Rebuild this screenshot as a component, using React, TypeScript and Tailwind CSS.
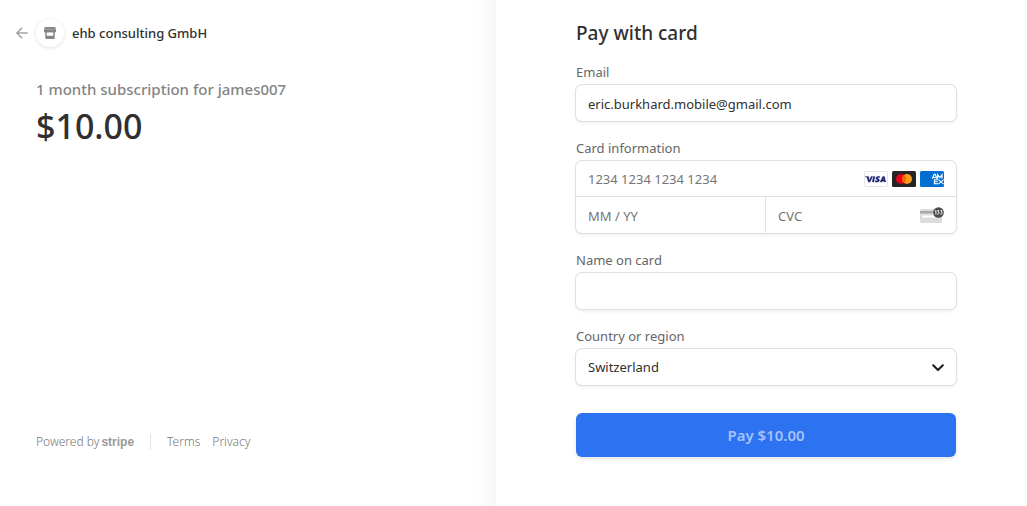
import { useState } from "react";
import type { ReactNode } from "react";

const labelClass = "block text-[13px] leading-4 text-[#666666] mb-[5px]";
const boxClass =
  "rounded-md bg-white shadow-[0_0_0_1px_#e0e0e0,0_2px_4px_0_rgba(0,0,0,0.07),0_1px_2px_0_rgba(0,0,0,0.05)]";
const inputClass =
  "block w-full h-9 px-3 pt-px text-[13px] text-[#303030] placeholder:text-[#757575] bg-transparent outline-none";

function BackIcon() {
  return (
    <svg width="12" height="12" viewBox="0 0 12 12" fill="none" stroke="#a3a3a3" strokeWidth="1.6" strokeLinecap="round" strokeLinejoin="round">
      <path d="M11.2 6H1M5.6 1.2L.9 6l4.7 4.8" />
    </svg>
  );
}

function StoreIcon() {
  return (
    <svg width="12" height="12" viewBox="0 0 12 12" fill="#858585">
      <path d="M1.2 0h9.6c.3 0 .5.2.6.4L12 3v1.2c0 .8-.6 1.3-1.3 1.3v5.7c0 .5-.3.8-.8.8H2.1c-.5 0-.8-.3-.8-.8V5.5C.6 5.5 0 5 0 4.2V3L.6.4c.1-.2.3-.4.6-.4z" />
      <path d="M1 2.2h10" stroke="#b4b4b4" strokeWidth=".7" />
      <path d="M2.8 5.2c.6.5 1.3.5 2 0 .7.5 1.7.5 2.4 0 .7.5 1.4.5 2 0v3.6H2.8z" fill="#fff" />
    </svg>
  );
}

function VisaIcon() {
  return (
    <svg width="24" height="16" viewBox="0 0 24 16" role="img" aria-label="Visa">
      <rect x=".5" y=".5" width="23" height="15" rx="1" fill="#fff" stroke="#e3e3e8" />
      <path
        d="M2.8 6.15c-.4-.2-.9-.4-1.5-.5l.05-.2h2.6c.35 0 .6.12.7.5l.6 2.9.15.8 1.55-4.2h1.7L6.1 11.05H4.4zM10.9 5.44l-1 5.62H8.3l1-5.62zM14.4 5.3c.6 0 1.1.12 1.4.24l-.2 1.3c-.9-.4-2.1-.35-2.1.17 0 .6 2 .7 2 2.2 0 1.2-1.1 1.95-2.7 1.95-.7 0-1.4-.14-1.7-.3l.22-1.35c.9.45 2.4.55 2.4-.1 0-.65-1.9-.7-1.9-2.15 0-1.15 1.1-1.96 2.58-1.96zM20.5 5.44l1.28 5.62h-1.45l-.2-.85h-2.05l-.33.85h-1.7l2.38-5.12c.17-.38.45-.5.8-.5zm-.95 2.03l-.8 1.6h1.15z"
        fill="#171e6c"
        stroke="#171e6c"
        strokeWidth=".3"
      />
    </svg>
  );
}

function MastercardIcon() {
  return (
    <svg width="24" height="16" viewBox="0 0 24 16" role="img" aria-label="Mastercard">
      <rect width="24" height="16" rx="1.5" fill="#252525" />
      <circle cx="9" cy="8" r="5" fill="#eb001b" />
      <circle cx="15" cy="8" r="5" fill="#f79e1b" />
      <path d="M12 4a5 5 0 0 1 0 8 5 5 0 0 1 0-8z" fill="#ff5f00" />
    </svg>
  );
}

function AmexIcon() {
  return (
    <svg width="24" height="16" viewBox="0 0 24 16" role="img" aria-label="American Express">
      <rect width="24" height="16" rx="1.5" fill="#016fd0" />
      <g fill="none" stroke="#fff" strokeWidth="1.1">
        <path d="M12.2 7.8l2-4.4h1l1.9 4.4M13.2 6.5h3M17.6 7.8V3.6l2.2 3 2.2-3v4.2" />
        <path d="M18 8.8h-3.6v4H18M14.4 10.8h3.2M18.4 8.6l5.2 4.6M23.6 8.6l-5.2 4.6" />
      </g>
    </svg>
  );
}

function CvcIcon() {
  return (
    <svg width="24" height="16" viewBox="0 0 24 16" role="img" aria-label="Card security code">
      <rect y="2" width="22" height="14" rx="1.5" fill="#dcdcdc" />
      <rect y="4" width="22" height="2.5" fill="#a9a9a9" />
      <rect x="2" y="8.5" width="13" height="2" rx=".5" fill="#fff" />
      <circle cx="18.5" cy="5.5" r="5.3" fill="#4a4a4a" />
      <path d="M15 4l.9-.5v4M17.2 3.7h1.7L18 5.2c1.8.1 1.3 2.4-.9 2M20.4 3.7h1.7l-.9 1.5c1.8.1 1.3 2.4-.9 2" fill="none" stroke="#fff" strokeWidth=".9" />
    </svg>
  );
}

interface FieldProps {
  id: string;
  label: string;
  children: ReactNode;
}

function Field({ id, label, children }: FieldProps) {
  return (
    <div>
      <label htmlFor={id} className={labelClass}>
        {label}
      </label>
      {children}
    </div>
  );
}

function OrderSummary() {
  return (
    <section className="flex flex-col justify-between pt-[19px] pb-14 pl-4 pr-8 bg-[linear-gradient(to_left,#f8f8f8,#ffffff_20px)]">
      <div>
        <header className="flex items-center">
          <a href="#back" aria-label="Back" className="mr-2">
            <BackIcon />
          </a>
          <div className="flex size-7 items-center justify-center rounded-full bg-white shadow-[0_1px_4px_rgba(0,0,0,0.12)]">
            <StoreIcon />
          </div>
          <span className="ml-2 text-[13px] leading-7 font-medium text-[#303030]">ehb consulting GmbH</span>
        </header>
        <div className="mt-8 ml-5">
          <h1 className="text-[15px] leading-5 font-medium text-[#848484]">
            1 month subscription for james007
          </h1>
          <p className="mt-1 text-[34px] leading-[46px] font-medium text-[#303030]">$10.00</p>
        </div>
      </div>
      <footer className="ml-5 flex items-center text-xs font-light text-[#777777]">
        <a href="#stripe" className="flex items-center gap-0.5">
          Powered by
          <span className="font-['Liberation_Sans',sans-serif] font-bold text-[#999999]">stripe</span>
        </a>
        <div className="ml-4 flex items-center gap-3 border-l border-[#e2e2e2] pl-4">
          <a href="#terms">Terms</a>
          <a href="#privacy">Privacy</a>
        </div>
      </footer>
    </section>
  );
}

function PaymentForm() {
  const [email, setEmail] = useState("eric.burkhard.mobile@gmail.com");
  const [name, setName] = useState("");

  return (
    <form className="pt-[21px] pb-12 pl-20 pr-9" onSubmit={(e) => e.preventDefault()}>
      <h2 className="text-[19px] leading-6 font-medium text-[#303030]">Pay with card</h2>
      <div className="mt-[19px] flex flex-col gap-[19px]">
        <Field id="email" label="Email">
          <div className={boxClass}>
            <input id="email" type="email" value={email} onChange={(e) => setEmail(e.target.value)} className={inputClass} />
          </div>
        </Field>
        <Field id="cardNumber" label="Card information">
          <div className={boxClass}>
            <div className="flex h-9 items-center border-b border-[#e0e0e0] pr-3">
              <input id="cardNumber" placeholder="1234 1234 1234 1234" className={inputClass} />
              <div className="flex shrink-0 gap-1">
                <VisaIcon />
                <MastercardIcon />
                <AmexIcon />
              </div>
            </div>
            <div className="grid grid-cols-2">
              <div className="border-r border-[#e0e0e0]">
                <input aria-label="Expiration" placeholder="MM / YY" className={inputClass} />
              </div>
              <div className="flex items-center pr-3">
                <input aria-label="CVC" placeholder="CVC" className={inputClass} />
                <div className="shrink-0">
                  <CvcIcon />
                </div>
              </div>
            </div>
          </div>
        </Field>
        <Field id="name" label="Name on card">
          <div className={boxClass}>
            <input id="name" value={name} onChange={(e) => setName(e.target.value)} className={inputClass} />
          </div>
        </Field>
        <Field id="country" label="Country or region">
          <div className={`${boxClass} grid items-center`}>
            <select id="country" className={`${inputClass} col-start-1 row-start-1 appearance-none`}>
              <option>Switzerland</option>
            </select>
            <svg
              className="pointer-events-none col-start-1 row-start-1 mr-3 justify-self-end"
              width="12" height="12" viewBox="0 0 12 12" fill="none" stroke="#1a1a1a" strokeWidth="2" strokeLinecap="round" strokeLinejoin="round"
            >
              <path d="M1.2 4.2L6 9l4.8-4.8" />
            </svg>
          </div>
        </Field>
      </div>
      <button
        type="submit"
        className="mt-7 h-11 w-full rounded-md bg-[#2d72f0] text-[15px] font-semibold text-[#a4c3fa] shadow-[0_2px_4px_rgba(0,0,0,0.1)]"
      >
        Pay $10.00
      </button>
    </form>
  );
}

export default function App() {
  return (
    <main className="grid min-h-screen grid-cols-2 bg-white pr-[35px] font-['Noto_Sans',sans-serif]">
      <OrderSummary />
      <PaymentForm />
    </main>
  );
}
